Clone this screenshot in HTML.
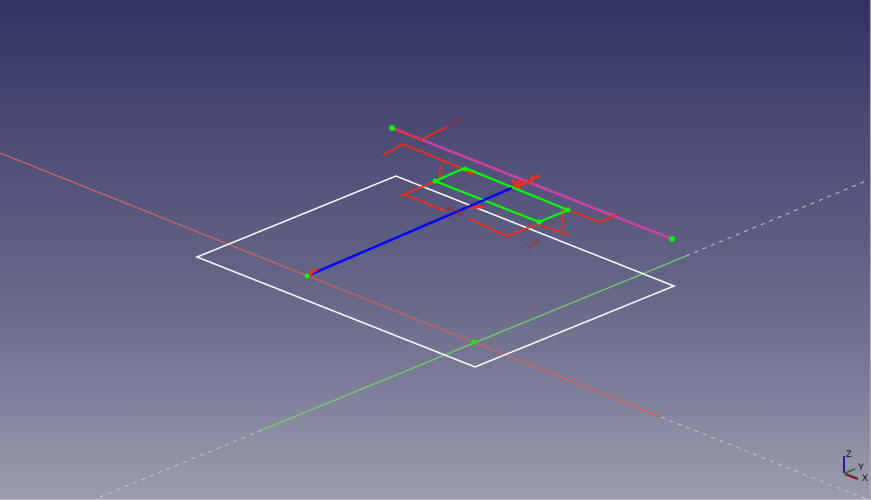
<!DOCTYPE html>
<html><head><meta charset="utf-8"><style>
html,body{margin:0;padding:0}
body{width:871px;height:500px;overflow:hidden;background:linear-gradient(#333364,#6a6a8a 62%,#9c9cb0)}
svg{display:block}
</style></head><body>
<svg width="871" height="500" viewBox="0 0 871 500" xmlns="http://www.w3.org/2000/svg">
<line x1="0" y1="153" x2="661" y2="417" stroke="#d46060" stroke-width="1.3"/>
<line x1="661" y1="417" x2="866" y2="499" stroke="#c8c8d0" stroke-width="1" stroke-dasharray="4,5"/>
<line x1="262" y1="430" x2="686" y2="256" stroke="#70d070" stroke-width="1.3"/>
<line x1="686" y1="256" x2="866" y2="181" stroke="#c8c8d0" stroke-width="1" stroke-dasharray="4,5"/>
<line x1="100" y1="497" x2="262" y2="430" stroke="#c8c8d0" stroke-width="1" stroke-dasharray="4,5"/>
<polygon points="197,257 396,176 674,286 475,367" fill="none" stroke="#fff" stroke-width="1.5"/>
<line x1="392" y1="128" x2="672" y2="239" stroke="#d040a8" stroke-width="2.5"/>
<g stroke="#ff2a10" stroke-width="1.6" fill="none">
<line x1="395" y1="130" x2="423" y2="140"/>
<line x1="420" y1="140" x2="447" y2="127"/>
<polyline points="383,155 403,144 473,173"/>
<polyline points="400,196 436,181"/>
<polyline points="404,194 445,211"/>
<polyline points="470,219 507,236 538,224"/>
<line x1="540" y1="225" x2="570" y2="235"/>
<polyline points="562,208 600,222 617,214"/>
<line x1="440" y1="166" x2="440" y2="179"/>
<line x1="562" y1="207" x2="562" y2="228"/>
</g>
<g stroke="#ff2a10" stroke-width="3" fill="none">
<line x1="470" y1="207" x2="483" y2="207"/>
<path d="M512 188 l8 -4 l10 -2 l4 -5 l5 -1"/>
<path d="M512 180 l8 8 M520 180 l-6 8"/>
<line x1="463" y1="169" x2="473" y2="174"/>
</g>
<polygon points="435,181 465,168 568,210 539,222" fill="none" stroke="#00ff00" stroke-width="2.2"/>
<line x1="307" y1="276" x2="512" y2="188" stroke="#0000ff" stroke-width="2.5"/>
<path d="M310 277 q0 -6 7 -7" stroke="#ff2a10" stroke-width="3" fill="none"/>
<g fill="#00ff00">
<circle cx="392" cy="128" r="3"/>
<circle cx="672" cy="239" r="3"/>
<circle cx="307" cy="276" r="2.5"/>
<circle cx="474" cy="342" r="2.5"/>
<circle cx="435" cy="181" r="2.5"/>
<circle cx="465" cy="169" r="2.5"/>
<circle cx="568" cy="210" r="2.5"/>
<circle cx="539" cy="222" r="2.5"/>
</g>
<g fill="#b02020" font-family="Liberation Sans, sans-serif" font-size="7">
<text x="450" y="128" transform="rotate(-30 450 128)">1.00</text>
<text x="446" y="209" transform="rotate(25 446 209)">10.00</text>
<text x="528" y="249" transform="rotate(-25 528 249)">1.50</text>
</g>
<line x1="844" y1="456" x2="844" y2="473" stroke="#2020a0" stroke-width="2"/>
<line x1="845" y1="473" x2="855" y2="469" stroke="#208020" stroke-width="2"/>
<line x1="845" y1="474" x2="858" y2="479" stroke="#802020" stroke-width="2.5"/>
<g fill="#000" font-family="Liberation Sans, sans-serif" font-size="9">
<text x="846" y="457">Z</text>
<text x="858" y="470">Y</text>
<text x="862" y="481">X</text>
</g>
<line x1="0" y1="499.5" x2="871" y2="499.5" stroke="#c0c0cc" stroke-width="1"/>
<line x1="870.5" y1="0" x2="870.5" y2="500" stroke="#b0b0c0" stroke-width="1"/>
</svg>
</body></html>
